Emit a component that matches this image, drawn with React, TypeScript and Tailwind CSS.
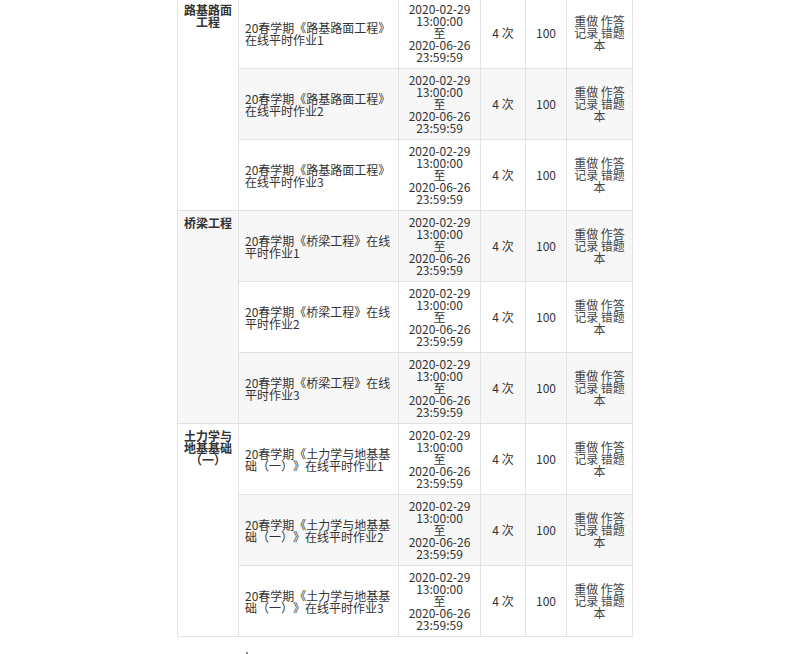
const groups = [
  { course: '路基路面工程', name: '《路基路面工程》在线平时作业' },
  { course: '桥梁工程', name: '《桥梁工程》在线平时作业' },
  { course: '土力学与地基基础（一）', name: '《土力学与地基基础（一）》在线平时作业' },
];

const cell = 'border border-[#e3e3e3] px-[5px] py-[5px] align-middle';

const App = () => {
  return (
    <div className="min-h-screen bg-white text-[12px] leading-[12px] text-[#333] font-['Noto_Sans_CJK_SC','Noto_Sans',sans-serif] [text-spacing-trim:space-all] overflow-hidden">
      <table className="ml-[177px] mt-[-3px] w-[456px] table-fixed border-collapse">
        <colgroup>
          <col className="w-[61px]" />
          <col className="w-[160px]" />
          <col className="w-[82px]" />
          <col className="w-[45px]" />
          <col className="w-[41px]" />
          <col className="w-[66px]" />
        </colgroup>
        <tbody>
          {groups.map((g) =>
            [1, 2, 3].map((n) => (
              <tr key={g.course + n} className="h-[71px] even:bg-[#f7f7f7]">
                {n === 1 && (
                  <td rowSpan={3} className={`${cell} !align-top pt-[6px] text-center font-bold`}>
                    {g.course}
                  </td>
                )}
                <td className={`${cell} pl-[6px] pt-[7px]`}>
                  20春学期{g.name}
                  {n}
                </td>
                <td className={`${cell} text-center`}>
                  2020-02-29
                  <br />
                  13:00:00
                  <br />
                  至
                  <br />
                  2020-06-26
                  <br />
                  23:59:59
                </td>
                <td className={`${cell} text-center`}>4 次</td>
                <td className={`${cell} text-center`}>100</td>
                <td className={`${cell} text-center text-[#444]`}>
                  <a className="cursor-pointer">重做</a> <a className="cursor-pointer">作答记录</a>{' '}
                  <a className="cursor-pointer">错题本</a>
                </td>
              </tr>
            ))
          )}
        </tbody>
      </table>
      <div className="ml-[246px] mt-[15px] h-[2px] w-[2px] bg-[#8a8aa0]" />
    </div>
  );
};

export default App;
